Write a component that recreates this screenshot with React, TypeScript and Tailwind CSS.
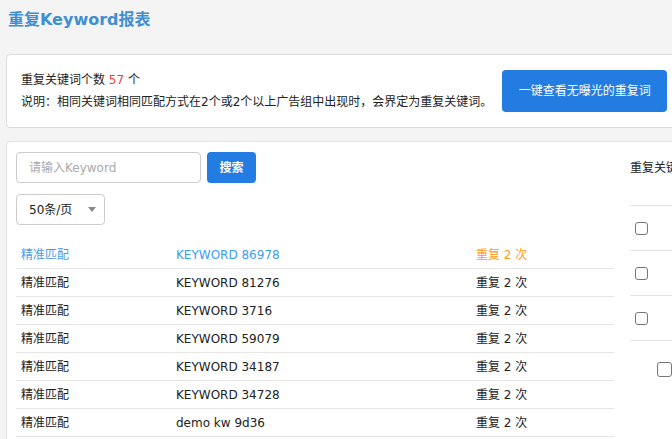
import React from "react";

const font = { fontFamily: '"DejaVu Sans", "Noto Sans CJK SC", sans-serif' };

const rows = [
  { kw: "KEYWORD 86978", active: true },
  { kw: "KEYWORD 81276" },
  { kw: "KEYWORD 3716" },
  { kw: "KEYWORD 59079" },
  { kw: "KEYWORD 34187" },
  { kw: "KEYWORD 34728" },
  { kw: "demo kw 9d36" },
];

const Checkbox = ({ big }: { big?: boolean }) => (
  <span
    className={`block rounded-[3px] border border-[#767676] bg-white ${big ? "w-[15px] h-[15px]" : "w-[13px] h-[13px]"}`}
  />
);

const App = () => {
  return (
    <div className="w-[672px] h-[439px] overflow-hidden bg-[#f4f4f4] text-[12px] text-[#222]" style={font}>
      <div className="w-[760px] px-[6px]">
        {/* Title */}
        <div className="h-[54px] pt-[8px] pl-[2px]">
          <h1 className="text-[16px] leading-[24px] font-bold text-[#3f8fd0]">重复Keyword报表</h1>
        </div>

        {/* Summary card */}
        <div className="h-[74px] rounded-[4px] border border-[#dcdcdc] bg-white flex items-center pl-[14px] gap-[10px]">
          <div className="leading-[22px] whitespace-nowrap">
            <p>
              重复关键词个数 <span className="text-[#f33b3b]">57</span> 个
            </p>
            <p>说明：相同关键词相同匹配方式在2个或2个以上广告组中出现时，会界定为重复关键词。</p>
          </div>
          <button className="h-[42px] w-[165px] rounded-[4px] bg-[#237ce1] text-white text-[12px]">
            一键查看无曝光的重复词
          </button>
        </div>

        {/* Table card */}
        <div className="mt-[13px] rounded-[4px] border border-[#e3e3e3] bg-white pt-[10px] pl-[9px] h-[320px] flex">
          <div className="w-[598px]">
            <div className="flex gap-[6px] h-[31px]">
              <div className="w-[185px] rounded-[4px] border border-[#cccccc] flex items-center pl-[12px] text-[#aaaaaa]">
                请输入Keyword
              </div>
              <button className="w-[49px] rounded-[4px] bg-[#237ce1] text-white font-bold">搜索</button>
            </div>
            <div className="mt-[11px] w-[89px] h-[31px] rounded-[4px] border border-[#cccccc] flex items-center justify-between pl-[12px] pr-[8px]">
              <span>50条/页</span>
              <span className="w-0 h-0 border-l-[4px] border-r-[4px] border-t-[5px] border-l-transparent border-r-transparent border-t-[#888]" />
            </div>
            <div className="mt-[16px]">
              {rows.map((r, i) => (
                <div key={i} className="h-[28px] border-b border-[#e6e6e6] flex items-center">
                  <div className={`w-[155px] pl-[5px] ${r.active ? "text-[#4d9be6]" : ""}`}>精准匹配</div>
                  <div className={`w-[300px] pl-[5px] ${r.active ? "text-[#3d9cf2]" : ""}`}>{r.kw}</div>
                  <div className={`pl-[5px] ${r.active ? "text-[#ff9a22]" : ""}`}>重复 2 次</div>
                </div>
              ))}
            </div>
          </div>

          <div className="ml-[16px] w-[120px]">
            <div className="h-[54px] pt-[7px] leading-[18px] border-b border-[#e3e3e3] whitespace-nowrap">重复关键词</div>
            <div className="h-[45px] border-b border-[#e3e3e3] flex items-center pl-[5px]">
              <Checkbox />
            </div>
            <div className="h-[45px] border-b border-[#e3e3e3] flex items-center pl-[5px]">
              <Checkbox />
            </div>
            <div className="h-[45px] border-b border-[#e3e3e3] flex items-center pl-[5px]">
              <Checkbox />
            </div>
            <div className="pt-[21px] pl-[27px]">
              <Checkbox big />
            </div>
          </div>
        </div>
      </div>
    </div>
  );
};

export default App;
